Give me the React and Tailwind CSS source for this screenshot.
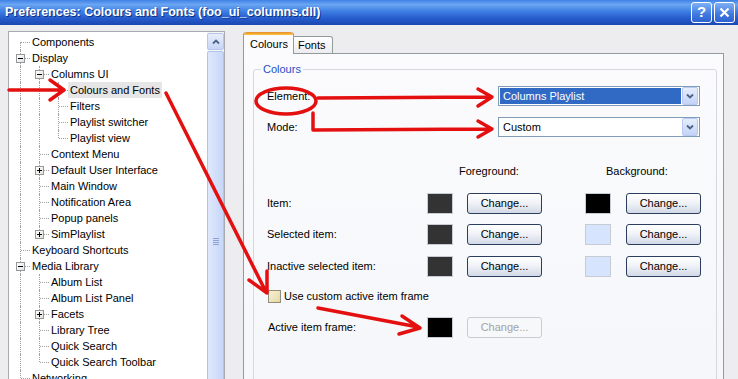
import React from 'react'

const treeItems = [
  { label: 'Components', level: 0, v: [], first: true },
  { label: 'Display', level: 0, v: [], exp: '-' },
  { label: 'Columns UI', level: 1, v: [true], exp: '-' },
  { label: 'Colours and Fonts', level: 2, v: [true, true], selected: true },
  { label: 'Filters', level: 2, v: [true, true] },
  { label: 'Playlist switcher', level: 2, v: [true, true] },
  { label: 'Playlist view', level: 2, v: [true, true], last: true },
  { label: 'Context Menu', level: 1, v: [true] },
  { label: 'Default User Interface', level: 1, v: [true], exp: '+' },
  { label: 'Main Window', level: 1, v: [true] },
  { label: 'Notification Area', level: 1, v: [true] },
  { label: 'Popup panels', level: 1, v: [true] },
  { label: 'SimPlaylist', level: 1, v: [true], exp: '+', last: true },
  { label: 'Keyboard Shortcuts', level: 0, v: [] },
  { label: 'Media Library', level: 0, v: [], exp: '-' },
  { label: 'Album List', level: 1, v: [true] },
  { label: 'Album List Panel', level: 1, v: [true] },
  { label: 'Facets', level: 1, v: [true], exp: '+' },
  { label: 'Library Tree', level: 1, v: [true] },
  { label: 'Quick Search', level: 1, v: [true] },
  { label: 'Quick Search Toolbar', level: 1, v: [true], last: true },
  { label: 'Networking', level: 0, v: [] },
]

const TreeRow = ({ item }) => (
  <div className="flex h-[16px] items-center">
    {item.v.map((on, i) => (
      <div key={i} className="relative h-full w-[19px] shrink-0">
        {on && <div className="absolute left-[11px] top-0 bottom-0 border-l border-dotted border-[#a0a0a0]" />}
      </div>
    ))}
    <div className="relative h-full w-[21px] shrink-0">
      <div className={'absolute left-[11px] border-l border-dotted border-[#a0a0a0] ' + (item.first ? 'top-[8px] ' : 'top-0 ') + (item.last ? 'h-[8px]' : 'bottom-0')} />
      <div className="absolute left-[12px] top-[8px] w-[9px] border-t border-dotted border-[#a0a0a0]" />
      {item.exp && (
        <div className="absolute left-[7px] top-[4px] flex h-[9px] w-[9px] items-center justify-center border border-[#94979c] bg-[linear-gradient(135deg,#ffffff,#e3e3de)]">
          <div className="relative h-[5px] w-[5px]">
            <div className="absolute left-0 top-[2px] h-px w-[5px] bg-black" />
            {item.exp === '+' && <div className="absolute left-[2px] top-0 h-[5px] w-px bg-black" />}
          </div>
        </div>
      )}
    </div>
    <span className={'whitespace-nowrap px-[2px] leading-[16px] ' + (item.selected ? 'bg-[#e6e6e6]' : '')}>{item.label}</span>
  </div>
)

const XpButton = ({ disabled }) =>
  disabled ? (
    <div className="flex h-[21px] w-[75px] items-center justify-center rounded-[3px] border border-[#cbcbd2] bg-[#f7f8fa] text-[#a3a3a3]">
      Change...
    </div>
  ) : (
    <div className="flex h-[21px] w-[75px] items-center justify-center rounded-[3px] border border-[#2c3d62] bg-[linear-gradient(to_bottom,#ffffff,#f1f3f8_45%,#d2d9e6)] text-black">
      Change...
    </div>
  )

const Swatch = ({ color }) => (
  <div className="h-[21px] w-[26px] shrink-0 border border-[#c8cbd3]" style={{ background: color }} />
)

const Combo = ({ text, selected }) => (
  <div className="flex h-[20px] w-[202px] items-center border border-[#7f9db9] bg-white p-px">
    <div className={'flex h-full flex-1 items-center pl-[3px] ' + (selected ? 'bg-[#316ac5] text-white' : 'text-black')}>{text}</div>
    <div className="ml-px flex h-[18px] w-[16px] items-center justify-center rounded-[2px] border border-[#b9c9ef] bg-[linear-gradient(to_bottom,#e6eefc,#c3d3f7)]">
      <svg width="8" height="6" viewBox="0 0 8 6">
        <path d="M1 1.5 L4 4.5 L7 1.5" fill="none" stroke="#4d6185" strokeWidth="1.8" />
      </svg>
    </div>
  </div>
)

const ColourRow = ({ label, fg, bg, className }) => (
  <div className={'flex h-[21px] items-center ' + className}>
    <div className="w-[173px] shrink-0 pl-[13px]">{label}</div>
    <Swatch color={fg} />
    <div className="ml-[14px]"><XpButton /></div>
    <div className="ml-[43px]"><Swatch color={bg} /></div>
    <div className="ml-[15px]"><XpButton /></div>
  </div>
)

export default function App() {
  return (
    <div className="relative h-[379px] w-[738px] overflow-hidden bg-[#edecee] font-['Liberation_Sans',Arial,sans-serif] text-[11px] text-black">
      {/* title bar */}
      <div className="flex h-[25px] items-center justify-between bg-[linear-gradient(to_bottom,#3f82e6_0%,#6aa6f1_18%,#3e7fe4_45%,#2559cb_75%,#1c48b0_100%)] pl-[5px] pr-[3px]">
        <span className="text-[12.5px] font-bold text-white [text-shadow:1px_1px_0_#0f2f80]">Preferences: Colours and Fonts (foo_ui_columns.dll)</span>
        <div className="flex gap-[2px]">
          <div className="flex h-[21px] w-[21px] items-center justify-center rounded-[3px] border border-white bg-[linear-gradient(to_bottom,#7fb0f5,#3f79e0_60%,#2d62d0)] text-[15px] font-bold text-white">?</div>
          <div className="flex h-[21px] w-[21px] items-center justify-center rounded-[3px] border border-white bg-[linear-gradient(to_bottom,#7fb0f5,#3f79e0_60%,#2d62d0)]">
            <svg width="11" height="11" viewBox="0 0 11 11">
              <path d="M1.5 1.5 L9.5 9.5 M9.5 1.5 L1.5 9.5" stroke="white" strokeWidth="2.2" />
            </svg>
          </div>
        </div>
      </div>

      <div className="flex pt-[6px]">
        {/* tree */}
        <div className="ml-[8px] flex h-[400px] w-[217px] border border-[#a7abb0] bg-white">
          <div className="flex-1 pt-[2px]">
            {treeItems.map((item) => (
              <TreeRow key={item.label} item={item} />
            ))}
          </div>
          <div className="flex w-[17px] flex-col bg-[#f4f5f8] pt-px">
            <div className="flex h-[17px] items-center justify-center rounded-[2px] border border-[#b7c6ea] bg-[linear-gradient(to_bottom,#e8eefc,#c6d5f7)]">
              <svg width="8" height="6" viewBox="0 0 8 6">
                <path d="M1 4.5 L4 1.5 L7 4.5" fill="none" stroke="#4d6185" strokeWidth="1.8" />
              </svg>
            </div>
            <div className="mt-px flex flex-1 flex-col items-center rounded-[2px] border border-[#b2c3ec] bg-[linear-gradient(to_right,#dfe8fc,#c8d7f8)] pt-[186px]">
              <div className="flex w-[6px] flex-col gap-px">
                <div className="h-px bg-[#8ea3d4]" />
                <div className="h-px bg-[#8ea3d4]" />
                <div className="h-px bg-[#8ea3d4]" />
                <div className="h-px bg-[#8ea3d4]" />
              </div>
            </div>
          </div>
        </div>

        {/* tabs */}
        <div className="ml-[18px] flex flex-col pt-px">
          <div className="relative z-10 -mb-px flex items-end">
            <div className="flex h-[22px] w-[51px] flex-col rounded-t-[3px] border-x border-[#919b9c] bg-[#fbfbfd]">
              <div className="h-[3px] rounded-t-[3px] bg-[linear-gradient(to_bottom,#e68b2c,#ffc73c)]" />
              <div className="flex flex-1 items-center pl-[6px]">Colours</div>
            </div>
            <div className="flex h-[18px] w-[39px] items-center rounded-tr-[3px] border-r border-t border-b border-[#919b9c] bg-[linear-gradient(to_bottom,#ffffff,#ecebf0)] pl-[4px]">Fonts</div>
          </div>
          <div className="h-[400px] w-[481px] border border-[#919b9c] bg-[linear-gradient(to_bottom,#fbfbfd,#f4f6f9)] px-[9px] pt-[8px]">
            <fieldset className="h-[380px] w-[464px] rounded-[3px] border border-[#d5d8dc]">
              <legend className="ml-[7px] px-[2px] leading-[14px] text-[#1f4fc7]">Colours</legend>
              <div className="mt-[10px] flex h-[20px] items-center">
                <div className="w-[244px] shrink-0 pl-[13px]">Element:</div>
                <Combo text="Columns Playlist" selected />
              </div>
              <div className="mt-[11px] flex h-[20px] items-center">
                <div className="w-[244px] shrink-0 pl-[13px]">Mode:</div>
                <Combo text="Custom" />
              </div>
              <div className="mt-[27px] flex h-[14px] items-center">
                <div className="w-[205px] shrink-0" />
                <div className="w-[147px] shrink-0">Foreground:</div>
                <div>Background:</div>
              </div>
              <ColourRow className="mt-[15px]" label="Item:" fg="#333333" bg="#000000" />
              <ColourRow className="mt-[10px]" label="Selected item:" fg="#333333" bg="#d6e4fd" />
              <ColourRow className="mt-[11px]" label="Inactive selected item:" fg="#333333" bg="#d6e4fd" />
              <div className="mt-[12px] flex h-[14px] items-center pl-[14px]">
                <div className="h-[13px] w-[13px] border border-[#8f8d80] bg-[linear-gradient(135deg,#fff4c8,#e6d28c)] p-px">
                  <div className="h-full w-full bg-[linear-gradient(135deg,#f6eed0,#e7dcb0)]" />
                </div>
                <span className="ml-[3px]">Use custom active item frame</span>
              </div>
              <div className="mt-[14px] flex h-[21px] items-center">
                <div className="w-[173px] shrink-0 pl-[14px]">Active item frame:</div>
                <Swatch color="#000000" />
                <div className="ml-[14px]"><XpButton disabled /></div>
              </div>
            </fieldset>
          </div>
        </div>
      </div>

      {/* red annotations */}
      <svg className="pointer-events-none absolute left-0 top-0" width="738" height="379" viewBox="0 0 738 379">
        <g fill="none" stroke="#e41010" strokeWidth="3.5" strokeLinecap="round" strokeLinejoin="round">
          <path d="M9 90 L62 90 M50 80 L64 90 L50 100" />
          <path d="M166 93 L266 292 M249 280 L267 293 L267 271" />
          <ellipse cx="286" cy="101" rx="30" ry="13" />
          <path d="M318 98 L490 97 M478 89 L492 97 L478 106" />
          <path d="M313 113 L313 130 L490 129 M478 121 L492 129 L478 137" />
          <path d="M318 308 L418 327 M402 316 L420 328 L399 334" />
        </g>
      </svg>
    </div>
  )
}
